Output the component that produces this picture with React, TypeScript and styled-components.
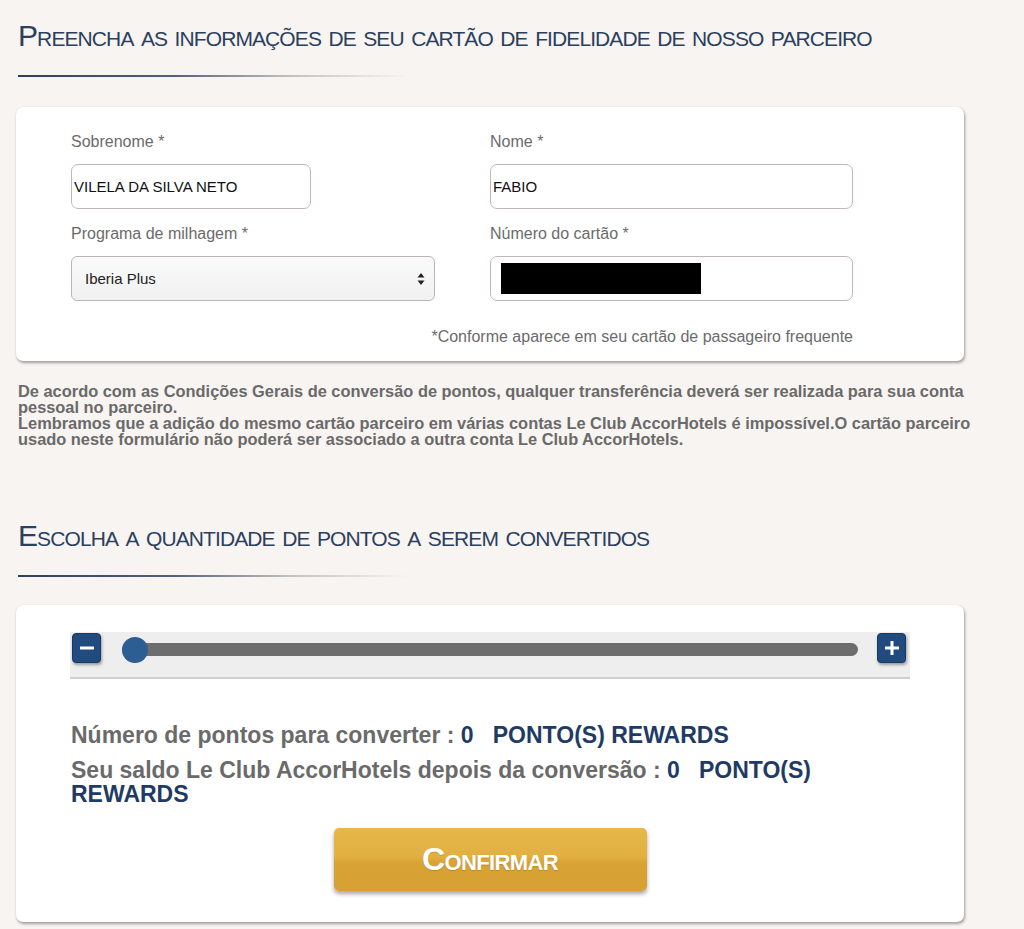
import React, { useState } from "react"
import styled, { createGlobalStyle } from "styled-components"

const GlobalStyle = createGlobalStyle`
  html, body {
    margin: 0;
    padding: 0;
    background: #f8f4f1;
    font-family: "Liberation Sans", Arial, sans-serif;
  }
`

const Page = styled.main`
  width: 948px;
  padding: 0 0 8px 16px;
`

const SectionTitle = styled.h2<{ $top: number }>`
  margin: ${({ $top }) => $top}px 0 0 2px;
  font-size: 30px;
  line-height: 34px;
  font-weight: normal;
  font-variant: small-caps;
  letter-spacing: -0.9px;
  color: #2b3f5f;
`

const TitleRule = styled.div`
  margin: 22px 0 0 2px;
  width: 390px;
  height: 2px;
  background: linear-gradient(to right, #2b3f5f 0%, #51627c 40%, rgba(160, 160, 160, 0.6) 70%, rgba(248, 244, 241, 0) 100%);
`

const Card = styled.section`
  margin-top: 29px;
  background: #fff;
  border-radius: 7px;
  box-shadow: 1px 2px 3px rgba(0, 0, 0, 0.35), 0 0 1px rgba(0, 0, 0, 0.15);
`

const FormCard = styled(Card)`
  margin-top: 30px;
  padding: 25px 55px 14px 55px;
`

const FieldGrid = styled.div`
  display: grid;
  grid-template-columns: 364px 363px;
  column-gap: 55px;
  row-gap: 15px;
`

const Field = styled.label`
  display: flex;
  flex-direction: column;
  gap: 12px;
`

const LabelText = styled.span`
  font-size: 16px;
  line-height: 20px;
  color: #6b6b6b;
`

const TextInput = styled.div<{ $width?: number }>`
  box-sizing: border-box;
  width: ${({ $width }) => ($width ? `${$width}px` : "100%")};
  height: 45px;
  border: 1px solid #c3b6b8;
  border-radius: 7px;
  background: #fff;
  display: flex;
  align-items: center;
  padding: 0 9px 0 2px;
  font-size: 15px;
  color: #111;
`

const Redacted = styled.div`
  width: 200px;
  height: 31px;
  margin-left: 8px;
  background: #000;
`

const SelectBox = styled.div`
  box-sizing: border-box;
  width: 100%;
  height: 45px;
  border: 1px solid #bdb5b5;
  border-radius: 6px;
  background: linear-gradient(#fafafa, #f1f1f1);
  display: flex;
  align-items: center;
  justify-content: space-between;
  padding: 0 9px 0 13px;
  font-size: 15px;
  color: #222;
`

const Note = styled.p`
  margin: 26px 0 0 0;
  text-align: right;
  font-size: 16px;
  line-height: 20px;
  color: #6b6b6b;
  padding-right: 56px;
`

const Disclaimer = styled.div`
  margin: 22px 0 0 2px;
  font-size: 16.4px;
  line-height: 16px;
  font-weight: bold;
  color: #6a6a6a;
  white-space: nowrap;
`

const PointsCard = styled(Card)`
  margin-top: 28px;
  padding: 27px 54px 31px 54px;
  display: flex;
  flex-direction: column;
`

const SliderBar = styled.div`
  height: 44px;
  background: #eeeeee;
  border-bottom: 2px solid #cfcfcf;
  display: flex;
  align-items: flex-start;
  padding: 1px 4px 0 2px;
  gap: 21px;
`

const StepButton = styled.button`
  width: 29px;
  height: 30px;
  flex: none;
  border: 1px solid #163a63;
  border-radius: 4px;
  background: #214b7e;
  box-shadow: 1px 2px 3px rgba(0, 0, 0, 0.35);
  color: #fff;
  display: flex;
  align-items: center;
  justify-content: center;
  padding: 0;
  cursor: pointer;
`

const Track = styled.div`
  flex: 1;
  margin: 10px -2px 0 0;
  height: 13px;
  border-radius: 7px;
  background: #6d6d6d;
  position: relative;
`

const Thumb = styled.div`
  position: absolute;
  top: -6px;
  left: 0;
  width: 26px;
  height: 26px;
  border-radius: 50%;
  background: #2c5e93;
`

const Summary = styled.div`
  margin-top: 44px;
  padding-left: 1px;
  display: flex;
  flex-direction: column;
  gap: 11px;
`

const SummaryLine = styled.p`
  margin: 0;
  font-size: 23px;
  line-height: 24px;
  font-weight: bold;
  color: #6a6a6a;
`

const Value = styled.span`
  color: #1f3b65;
`

const ConfirmButton = styled.button`
  align-self: center;
  margin-top: 22px;
  width: 313px;
  height: 63px;
  border: none;
  border-radius: 5px;
  background: linear-gradient(#e6b749 0%, #e2b042 45%, #d9a234 55%, #d7a032 100%);
  box-shadow: 0 3px 4px rgba(0, 0, 0, 0.35);
  color: #fff;
  font-family: "Liberation Sans", Arial, sans-serif;
  font-size: 32px;
  font-weight: bold;
  font-variant: small-caps;
  letter-spacing: -0.6px;
  text-shadow: 0 1px 1px rgba(0, 0, 0, 0.15);
  cursor: pointer;
`

const SelectArrows = () => (
  <svg width="8" height="14" viewBox="0 0 8 14">
    <path d="M4 1 L7.5 5.5 L0.5 5.5 Z" fill="#222" />
    <path d="M4 13 L7.5 8.5 L0.5 8.5 Z" fill="#222" />
  </svg>
)

const MinusIcon = () => (
  <svg width="16" height="16" viewBox="0 0 16 16">
    <rect x="1" y="6.5" width="14" height="3" fill="#fff" />
  </svg>
)

const PlusIcon = () => (
  <svg width="16" height="16" viewBox="0 0 16 16">
    <rect x="1" y="6.5" width="14" height="3" fill="#fff" />
    <rect x="6.5" y="1" width="3" height="14" fill="#fff" />
  </svg>
)

const PointsValue = ({ value }: { value: number }) => (
  <>
    <Value>{value}</Value>&nbsp;&nbsp; <Value>PONTO(S)</Value> <Value>REWARDS</Value>
  </>
)

export default function App() {
  const [points, setPoints] = useState(0)
  const max = 10000

  return (
    <Page>
      <GlobalStyle />
      <SectionTitle $top={19}>Preencha as informações de seu cartão de fidelidade de nosso parceiro</SectionTitle>
      <TitleRule />

      <FormCard>
        <FieldGrid>
          <Field>
            <LabelText>Sobrenome *</LabelText>
            <TextInput $width={240}>VILELA DA SILVA NETO</TextInput>
          </Field>
          <Field>
            <LabelText>Nome *</LabelText>
            <TextInput>FABIO</TextInput>
          </Field>
          <Field>
            <LabelText>Programa de milhagem *</LabelText>
            <SelectBox>
              <span>Iberia Plus</span>
              <SelectArrows />
            </SelectBox>
          </Field>
          <Field>
            <LabelText>Número do cartão *</LabelText>
            <TextInput>
              <Redacted />
            </TextInput>
          </Field>
        </FieldGrid>
        <Note>*Conforme aparece em seu cartão de passageiro frequente</Note>
      </FormCard>

      <Disclaimer>
        De acordo com as Condições Gerais de conversão de pontos, qualquer transferência deverá ser realizada para sua conta
        <br />
        pessoal no parceiro.
        <br />
        Lembramos que a adição do mesmo cartão parceiro em várias contas Le Club AccorHotels é impossível.O cartão parceiro
        <br />
        usado neste formulário não poderá ser associado a outra conta Le Club AccorHotels.
      </Disclaimer>

      <SectionTitle $top={72}>Escolha a quantidade de pontos a serem convertidos</SectionTitle>
      <TitleRule />

      <PointsCard>
        <SliderBar>
          <StepButton onClick={() => setPoints(Math.max(0, points - 100))}>
            <MinusIcon />
          </StepButton>
          <Track>
            <Thumb style={{ left: `${(points / max) * 100}%` }} />
          </Track>
          <StepButton onClick={() => setPoints(Math.min(max, points + 100))}>
            <PlusIcon />
          </StepButton>
        </SliderBar>

        <Summary>
          <SummaryLine>
            Número de pontos para converter : <PointsValue value={points} />
          </SummaryLine>
          <SummaryLine>
            Seu saldo Le Club AccorHotels depois da conversão : <PointsValue value={points} />
          </SummaryLine>
        </Summary>

        <ConfirmButton>Confirmar</ConfirmButton>
      </PointsCard>
    </Page>
  )
}
